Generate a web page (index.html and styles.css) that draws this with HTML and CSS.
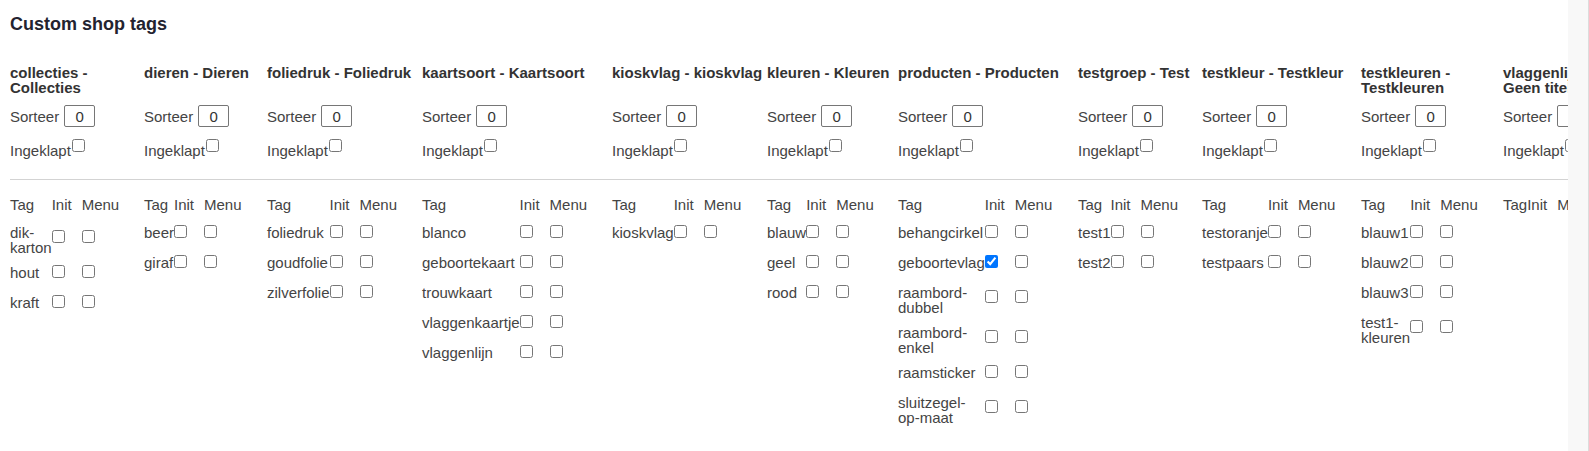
FILE: index.html
```html
<!DOCTYPE html>
<html lang="nl">
<head>
<meta charset="utf-8">
<title>Custom shop tags</title>
<link rel="stylesheet" href="styles.css">
</head>
<body>
<div class="page">
  <main class="content">
    <h2 class="title">Custom shop tags</h2>
    <div class="tags">
      <div class="gtitle">collecties - Collecties</div>
      <div class="gtitle">dieren - Dieren</div>
      <div class="gtitle">foliedruk - Foliedruk</div>
      <div class="gtitle">kaartsoort - Kaartsoort</div>
      <div class="gtitle">kioskvlag - kioskvlag</div>
      <div class="gtitle">kleuren - Kleuren</div>
      <div class="gtitle">producten - Producten</div>
      <div class="gtitle">testgroep - Test</div>
      <div class="gtitle">testkleur - Testkleur</div>
      <div class="gtitle">testkleuren - Testkleuren</div>
      <div class="gtitle">vlaggenlijn - Geen titel</div>

      <label class="sort"><span>Sorteer</span><input class="sort-input" type="text" value="0"></label>
      <label class="sort"><span>Sorteer</span><input class="sort-input" type="text" value="0"></label>
      <label class="sort"><span>Sorteer</span><input class="sort-input" type="text" value="0"></label>
      <label class="sort"><span>Sorteer</span><input class="sort-input" type="text" value="0"></label>
      <label class="sort"><span>Sorteer</span><input class="sort-input" type="text" value="0"></label>
      <label class="sort"><span>Sorteer</span><input class="sort-input" type="text" value="0"></label>
      <label class="sort"><span>Sorteer</span><input class="sort-input" type="text" value="0"></label>
      <label class="sort"><span>Sorteer</span><input class="sort-input" type="text" value="0"></label>
      <label class="sort"><span>Sorteer</span><input class="sort-input" type="text" value="0"></label>
      <label class="sort"><span>Sorteer</span><input class="sort-input" type="text" value="0"></label>
      <label class="sort"><span>Sorteer</span><input class="sort-input" type="text" value="0"></label>

      <label class="collapse"><span class="collapse-text">Ingeklapt</span><input type="checkbox"></label>
      <label class="collapse"><span class="collapse-text">Ingeklapt</span><input type="checkbox"></label>
      <label class="collapse"><span class="collapse-text">Ingeklapt</span><input type="checkbox"></label>
      <label class="collapse"><span class="collapse-text">Ingeklapt</span><input type="checkbox"></label>
      <label class="collapse"><span class="collapse-text">Ingeklapt</span><input type="checkbox"></label>
      <label class="collapse"><span class="collapse-text">Ingeklapt</span><input type="checkbox"></label>
      <label class="collapse"><span class="collapse-text">Ingeklapt</span><input type="checkbox"></label>
      <label class="collapse"><span class="collapse-text">Ingeklapt</span><input type="checkbox"></label>
      <label class="collapse"><span class="collapse-text">Ingeklapt</span><input type="checkbox"></label>
      <label class="collapse"><span class="collapse-text">Ingeklapt</span><input type="checkbox"></label>
      <label class="collapse"><span class="collapse-text">Ingeklapt</span><input type="checkbox"></label>

      <hr class="divider">

      <div class="tagtable">
        <div class="th">Tag</div><div class="th">Init</div><div class="th">Menu</div>
        <div class="tag">dik-karton</div><input type="checkbox"><input type="checkbox">
        <div class="tag">hout</div><input type="checkbox"><input type="checkbox">
        <div class="tag">kraft</div><input type="checkbox"><input type="checkbox">
      </div>
      <div class="tagtable">
        <div class="th">Tag</div><div class="th">Init</div><div class="th">Menu</div>
        <div class="tag">beer</div><input type="checkbox"><input type="checkbox">
        <div class="tag">giraf</div><input type="checkbox"><input type="checkbox">
      </div>
      <div class="tagtable">
        <div class="th">Tag</div><div class="th">Init</div><div class="th">Menu</div>
        <div class="tag">foliedruk</div><input type="checkbox"><input type="checkbox">
        <div class="tag">goudfolie</div><input type="checkbox"><input type="checkbox">
        <div class="tag">zilverfolie</div><input type="checkbox"><input type="checkbox">
      </div>
      <div class="tagtable">
        <div class="th">Tag</div><div class="th">Init</div><div class="th">Menu</div>
        <div class="tag">blanco</div><input type="checkbox"><input type="checkbox">
        <div class="tag">geboortekaart</div><input type="checkbox"><input type="checkbox">
        <div class="tag">trouwkaart</div><input type="checkbox"><input type="checkbox">
        <div class="tag">vlaggenkaartje</div><input type="checkbox"><input type="checkbox">
        <div class="tag">vlaggenlijn</div><input type="checkbox"><input type="checkbox">
      </div>
      <div class="tagtable">
        <div class="th">Tag</div><div class="th">Init</div><div class="th">Menu</div>
        <div class="tag">kioskvlag</div><input type="checkbox"><input type="checkbox">
      </div>
      <div class="tagtable">
        <div class="th">Tag</div><div class="th">Init</div><div class="th">Menu</div>
        <div class="tag">blauw</div><input type="checkbox"><input type="checkbox">
        <div class="tag">geel</div><input type="checkbox"><input type="checkbox">
        <div class="tag">rood</div><input type="checkbox"><input type="checkbox">
      </div>
      <div class="tagtable">
        <div class="th">Tag</div><div class="th">Init</div><div class="th">Menu</div>
        <div class="tag">behangcirkel</div><input type="checkbox"><input type="checkbox">
        <div class="tag">geboortevlag</div><input type="checkbox" checked><input type="checkbox">
        <div class="tag">raambord-dubbel</div><input type="checkbox"><input type="checkbox">
        <div class="tag">raambord-enkel</div><input type="checkbox"><input type="checkbox">
        <div class="tag">raamsticker</div><input type="checkbox"><input type="checkbox">
        <div class="tag">sluitzegel-op-maat</div><input type="checkbox"><input type="checkbox">
      </div>
      <div class="tagtable">
        <div class="th">Tag</div><div class="th">Init</div><div class="th">Menu</div>
        <div class="tag">test1</div><input type="checkbox"><input type="checkbox">
        <div class="tag">test2</div><input type="checkbox"><input type="checkbox">
      </div>
      <div class="tagtable">
        <div class="th">Tag</div><div class="th">Init</div><div class="th">Menu</div>
        <div class="tag">testoranje</div><input type="checkbox"><input type="checkbox">
        <div class="tag">testpaars</div><input type="checkbox"><input type="checkbox">
      </div>
      <div class="tagtable">
        <div class="th">Tag</div><div class="th">Init</div><div class="th">Menu</div>
        <div class="tag">blauw1</div><input type="checkbox"><input type="checkbox">
        <div class="tag">blauw2</div><input type="checkbox"><input type="checkbox">
        <div class="tag">blauw3</div><input type="checkbox"><input type="checkbox">
        <div class="tag">test1-kleuren</div><input type="checkbox"><input type="checkbox">
      </div>
      <div class="tagtable">
        <div class="th">Tag</div><div class="th">Init</div><div class="th">Menu</div>
      </div>
    </div>
  </main>
  <div class="gutter"></div>
</div>
</body>
</html>
```

FILE: styles.css
```css
* {
  box-sizing: border-box;
}

html, body {
  margin: 0;
  height: 100%;
}

body {
  font-family: "Liberation Sans", Arial, sans-serif;
  font-size: 15px;
  color: #444;
  background: #fff;
}

.page {
  display: flex;
  min-height: 100%;
}

.content {
  flex: none;
  width: 1568px;
  padding: 13px 0 0 10px;
  overflow: hidden;
  background: #fff;
}

.gutter {
  flex: 1;
  background: #f8f8f8;
  border-right: 1px solid #dcdcdc;
}

.title {
  margin: 0;
  font-size: 18px;
  line-height: 22px;
  font-weight: bold;
  color: #23232f;
}

.tags {
  display: grid;
  grid-template-columns: 134px 123px 155px 190px 155px 131px 180px 124px 159px 142px 110px;
  margin-top: 30px;
}

.gtitle {
  font-weight: bold;
  font-size: 15px;
  line-height: 15px;
  color: #333;
}

.sort {
  display: flex;
  align-items: baseline;
  gap: 5px;
  margin-top: 10px;
  color: #444;
}

.sort-input {
  width: 31px;
  height: 22px;
  padding: 0;
  border: 1px solid #767676;
  border-radius: 2px;
  font: 15px "Liberation Sans", Arial, sans-serif;
  color: #333;
  text-align: center;
  background: #fff;
}

.collapse {
  display: flex;
  align-items: flex-start;
  margin-top: 12px;
  color: #444;
}

.collapse-text {
  padding-top: 3px;
}

.collapse input {
  margin: 0 0 0 1px;
}

.divider {
  grid-column: 1 / -1;
  margin: 20px 0 0;
  height: 0;
  border: 0;
  border-top: 1px solid #d3d3d3;
}

.tagtable {
  display: grid;
  grid-template-columns: min-content 30px max-content;
  align-content: start;
  padding-top: 17px;
  line-height: 15px;
  color: #444;
}

.th {
  padding-bottom: 4px;
}

.tag {
  min-height: 30px;
  padding: 9px 0 1px;
}

.tagtable input {
  margin: 0;
  align-self: center;
  justify-self: start;
}
```
